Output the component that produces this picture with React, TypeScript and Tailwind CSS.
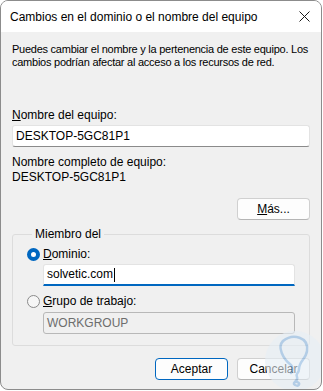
import React from "react"

const font = { fontFamily: '"Segoe UI", "Liberation Sans", Arial, sans-serif' }

const Radio = ({ checked }: { checked?: boolean }) =>
    checked ? (
        <span className="block w-[13px] h-[13px] rounded-full border-[4px] border-[#0067c0] bg-white shrink-0" />
    ) : (
        <span className="block w-[13px] h-[13px] rounded-full border border-[#8a8a8a] bg-[#f6f6f6] shrink-0" />
    )

const Button = ({ children, primary }: { children: React.ReactNode; primary?: boolean }) => (
    <div
        className={
            "w-[73px] h-[22px] rounded-[4px] flex items-center justify-center text-[12px] text-black " +
            (primary ? "bg-[#fdfdfd] border border-[#0067c0]" : "bg-[#fdfdfd] border border-[#d0d0d0] border-b-[#b5b5b5]")
        }
    >
        {children}
    </div>
)

export default function App() {
    return (
        <div className="w-[323px] h-[391px] bg-white" style={font}>
            <div className="relative w-[322px] h-[390px] border border-[#8c8c8c] rounded-lg overflow-hidden flex flex-col bg-[#f0f0f0]">
                {/* title bar */}
                <div className="h-[31px] bg-white flex items-center justify-between pl-[9px] pr-[11px] shrink-0">
                    <span className="text-[12px] text-black leading-none">Cambios en el dominio o el nombre del equipo</span>
                    <svg width="11" height="11" viewBox="0 0 11 11">
                        <path d="M0.5 0.5 L10.5 10.5 M10.5 0.5 L0.5 10.5" stroke="#1a1a1a" strokeWidth="1" />
                    </svg>
                </div>

                <div className="flex flex-col px-[11px] pt-[11px] text-[12px] leading-[13px] text-black">
                    <p className="whitespace-nowrap text-[11px] tracking-[-0.25px]">
                        Puedes cambiar el nombre y la pertenencia de este equipo. Los
                        <br />
                        cambios podrían afectar al acceso a los recursos de red.
                    </p>

                    <p className="mt-[40px]"><u>N</u>ombre del equipo:</p>
                    <div className="mt-[3px] h-[22px] bg-white border border-[#e3e3e3] border-b-[#8a8a8a] rounded-[3px] flex items-center px-[3px]">
                        DESKTOP-5GC81P1
                    </div>

                    <p className="mt-[9px]">Nombre completo de equipo:</p>
                    <p className="mt-[2px]">DESKTOP-5GC81P1</p>

                    <div className="mt-[14px] flex justify-end">
                        <Button><u>M</u>ás...</Button>
                    </div>

                    <fieldset className="mt-[8px] h-[118px] border border-[#dcdcdc] rounded-[3px] px-[14px]">
                        <legend className="ml-[5px] px-[3px] leading-[13px]">Miembro del</legend>
                        <div className="mt-[7px] flex items-center gap-[3px]">
                            <Radio checked />
                            <span><u>D</u>ominio:</span>
                        </div>
                        <div className="mt-[3px] ml-[16px] h-[22px] bg-white border border-[#e3e3e3] border-b-2 border-b-[#0067c0] rounded-t-[3px] flex items-center px-[3px]">
                            solvetic.com<span className="inline-block w-px h-[14px] bg-black ml-px" />
                        </div>
                        <div className="mt-[9px] flex items-center gap-[3px]">
                            <Radio />
                            <span><u>G</u>rupo de trabajo:</span>
                        </div>
                        <div className="mt-[4px] ml-[16px] h-[22px] bg-[#f0f0f0] border border-[#b8b8b8] rounded-[3px] flex items-center px-[3px] text-[#6d6d6d]">
                            WORKGROUP
                        </div>
                    </fieldset>

                    <div className="mt-[12px] flex justify-end gap-[9px]">
                        <Button primary>Aceptar</Button>
                        <Button>Cancelar</Button>
                    </div>
                </div>

                {/* watermark */}
                <svg className="absolute right-[-4px] bottom-[-2px] opacity-60" width="64" height="64" viewBox="0 0 64 64">
                    <circle cx="34" cy="34" r="30" fill="#e6eef6" />
                    <path
                        d="M22 14 C32 6 48 10 46 24 C45 32 38 34 38 42 C38 47 34 46 36 50 C38 54 30 56 34 58 C38 60 40 56 36 55"
                        fill="none"
                        stroke="#8bb6df"
                        strokeWidth="2.5"
                        strokeLinecap="round"
                    />
                    <path d="M22 14 C16 20 22 32 30 38 C32 40 32 44 30 46" fill="none" stroke="#8bb6df" strokeWidth="2.5" strokeLinecap="round" />
                </svg>
            </div>
        </div>
    )
}
